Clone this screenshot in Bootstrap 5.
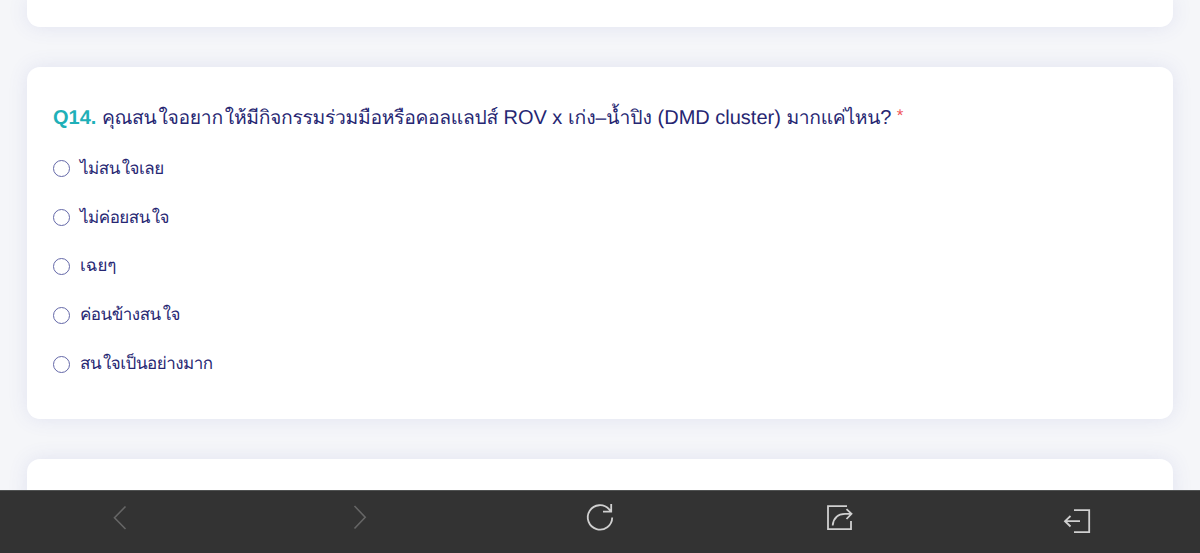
<!DOCTYPE html>
<html lang="th">
<head>
  <meta charset="UTF-8">
  <meta name="viewport" content="width=device-width, initial-scale=1.0">
  <title>แบบสอบถาม</title>
  <link href="https://cdn.jsdelivr.net/npm/bootstrap@5.3.0/dist/css/bootstrap.min.css" rel="stylesheet">
  <style>
    body {
      background: #f5f6f9;
      color: #262672;
      font-family: "Liberation Sans", sans-serif;
      text-rendering: geometricPrecision;
    }
    .survey {
      gap: 40px;
      padding: 0 27px;
    }
    .question-card {
      --bs-card-border-width: 0;
      --bs-card-border-radius: 13px;
      flex: none;
      box-shadow: 0 0 20px rgba(80, 90, 180, .12);
    }
    .card-prev { height: 27px; border-top-left-radius: 0; border-top-right-radius: 0; }
    .card-main { height: 351.5px; padding: 36px 26px 0; }
    .card-next { height: 80px; }
    .question-title {
      font-size: 20px;
      line-height: 30px;
      margin-bottom: 10px;
      white-space: nowrap;
    }
    .question-title .thai { font-size: 19.3px; }
    .tight { letter-spacing: -.3px; }
    .ai { margin-left: 2px; }
    .question-no { color: #1fb0b8; }
    .required { color: #f0555a; font-size: 17px; line-height: 1; vertical-align: 3px; }
    .option-row {
      height: 48.9px;
      font-size: 17px;
      gap: 10px;
      padding: 0;
      margin: 0;
    }
    .option-row .tight { letter-spacing: -.5px; }
    .option-row .form-check-input {
      width: 17px;
      height: 17px;
      margin: 0;
      border: 1.4px solid #6468a8;
      float: none;
    }
    .toolbar {
      height: 63px;
      background: #333;
      border-top: 1px solid #505252;
    }
    .toolbar button { height: 62px; }
    .toolbar svg { display: block; margin: 0 auto; }
  </style>
</head>
<body class="overflow-hidden vh-100">

  <!-- Questions -->
  <main class="survey d-flex flex-column">
    <div class="card question-card card-prev"></div>

    <div class="card question-card card-main">
      <h5 class="question-title fw-normal"><b class="question-no">Q14.</b> <span class="thai tight">คุณสน<span class="ai">ใ</span>จอยาก<span class="ai">ใ</span>ห้มีกิจกรรมร่วมมือหรือคอลแลปส์</span> ROV x <span class="thai">เก่ง–น้ำปิง</span> (DMD cluster) <span class="thai tight">มากแค่ไหน</span>? <span class="required">*</span></h5>

      <form>
        <label class="form-check option-row d-flex align-items-center">
          <input class="form-check-input" type="radio" name="q14" value="1">
          <span class="tight">ไม่สน<span class="ai">ใ</span>จเลย</span>
        </label>
        <label class="form-check option-row d-flex align-items-center">
          <input class="form-check-input" type="radio" name="q14" value="2">
          <span class="tight">ไม่ค่อยสน<span class="ai">ใ</span>จ</span>
        </label>
        <label class="form-check option-row d-flex align-items-center">
          <input class="form-check-input" type="radio" name="q14" value="3">
          <span>เฉยๆ</span>
        </label>
        <label class="form-check option-row d-flex align-items-center">
          <input class="form-check-input" type="radio" name="q14" value="4">
          <span class="tight">ค่อนข้างสน<span class="ai">ใ</span>จ</span>
        </label>
        <label class="form-check option-row d-flex align-items-center">
          <input class="form-check-input" type="radio" name="q14" value="5">
          <span class="tight">สน<span class="ai">ใ</span>จเป็นอย่างมาก</span>
        </label>
      </form>
    </div>

    <div class="card question-card card-next"></div>
  </main>

  <!-- Browser toolbar -->
  <nav class="toolbar fixed-bottom d-flex">
    <button class="btn border-0 rounded-0 p-0 flex-fill w-100" aria-label="Back">
      <svg width="60" height="62" fill="none" stroke="#666" stroke-width="1.6"><path d="M35.5 15.500 24.5 26.800 35.5 38"/></svg>
    </button>
    <button class="btn border-0 rounded-0 p-0 flex-fill w-100" aria-label="Forward">
      <svg width="60" height="62" fill="none" stroke="#666" stroke-width="1.6"><path d="M24.500 15 35.200 26.300 24.500 37.500"/></svg>
    </button>
    <button class="btn border-0 rounded-0 p-0 flex-fill w-100" aria-label="Reload">
      <svg width="60" height="62" fill="none" stroke="#d0d0d0" stroke-width="1.8"><path d="M42.200 26.500A12.200 12.200 0 1 1 39.200 18.400L41 20.500M41.200 13V20.700H33"/></svg>
    </button>
    <button class="btn border-0 rounded-0 p-0 flex-fill w-100" aria-label="Share">
      <svg width="60" height="62" fill="none" stroke="#d0d0d0" stroke-width="1.8"><path d="M37 15.200H18V38.200H41V30M22.700 34.500C23.300 27 28 22.800 35 22.800H41.500M36.500 18.200 41.500 22.800 36.500 28"/></svg>
    </button>
    <button class="btn border-0 rounded-0 p-0 flex-fill w-100" aria-label="Exit">
      <svg width="60" height="62" fill="none" stroke="#d0d0d0" stroke-width="1.8"><path d="M24 19.200H39.200V41.200H24M30 30.200H15M20.500 25 15 30.200 20.500 35.500"/></svg>
    </button>
  </nav>

  <script src="https://cdn.jsdelivr.net/npm/bootstrap@5.3.0/dist/js/bootstrap.bundle.min.js"></script>
</body>
</html>
